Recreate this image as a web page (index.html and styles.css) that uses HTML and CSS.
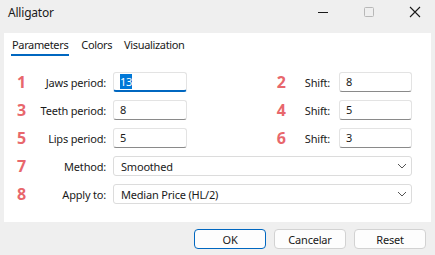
FILE: index.html
```html
<!DOCTYPE html>
<html lang="en">
<head>
  <meta charset="UTF-8">
  <title>Alligator</title>
  <link rel="stylesheet" href="styles.css">
</head>
<body>
<div class="window">
  <div class="titlebar">
    <span class="title">Alligator</span>
    <div class="controls">
      <span class="ctl">
        <svg width="12" height="12" viewBox="0 0 12 12"><path d="M1 6.5h10" stroke="#1a1a1a" stroke-width="1"/></svg>
      </span>
      <span class="ctl">
        <svg width="12" height="12" viewBox="0 0 12 12"><rect x="1.5" y="1.5" width="9" height="9" rx="1" fill="none" stroke="#b8b8b8" stroke-width="1"/></svg>
      </span>
      <span class="ctl">
        <svg width="12" height="12" viewBox="0 0 12 12"><path d="M1 1l10 10M11 1L1 11" stroke="#1a1a1a" stroke-width="1.1"/></svg>
      </span>
    </div>
  </div>

  <div class="panel">
    <div class="tabs">
      <span class="tab active">Parameters</span>
      <span class="tab">Colors</span>
      <span class="tab">Visualization</span>
    </div>

    <div class="form">
      <div class="row">
        <span class="num">1</span>
        <label class="lbl">Jaws period:</label>
        <div class="field focused"><span class="sel">13</span></div>
        <div class="right">
          <span class="num">2</span>
          <label class="lbl-s">Shift:</label>
          <div class="field">8</div>
        </div>
      </div>
      <div class="row">
        <span class="num">3</span>
        <label class="lbl">Teeth period:</label>
        <div class="field">8</div>
        <div class="right">
          <span class="num">4</span>
          <label class="lbl-s">Shift:</label>
          <div class="field">5</div>
        </div>
      </div>
      <div class="row">
        <span class="num">5</span>
        <label class="lbl">Lips period:</label>
        <div class="field">5</div>
        <div class="right">
          <span class="num">6</span>
          <label class="lbl-s">Shift:</label>
          <div class="field">3</div>
        </div>
      </div>
      <div class="row">
        <span class="num">7</span>
        <label class="lbl">Method:</label>
        <div class="combo">
          <span>Smoothed</span>
          <svg width="10" height="6" viewBox="0 0 10 6"><path d="M1 1l4 4 4-4" fill="none" stroke="#555" stroke-width="1"/></svg>
        </div>
      </div>
      <div class="row">
        <span class="num">8</span>
        <label class="lbl">Apply to:</label>
        <div class="combo">
          <span>Median Price (HL/2)</span>
          <svg width="10" height="6" viewBox="0 0 10 6"><path d="M1 1l4 4 4-4" fill="none" stroke="#555" stroke-width="1"/></svg>
        </div>
      </div>
    </div>
  </div>

  <div class="buttons">
    <button class="btn default">OK</button>
    <button class="btn">Cancelar</button>
    <button class="btn">Reset</button>
  </div>
</div>
</body>
</html>
```

FILE: styles.css
```css
* {
    margin: 0;
    padding: 0;
    box-sizing: border-box;
}

body {
    background-color: #efefef;
    font-family: "Noto Sans", "Open Sans", sans-serif;
    font-size: 11px;
    letter-spacing: -0.2px;
    color: #1a1a1a;
}

.window {
    width: 435px;
    height: 255px;
}

.titlebar {
    height: 33px;
    display: flex;
    align-items: center;
    justify-content: space-between;
    padding-left: 8px;
}

.title {
    font-size: 12px;
    margin-top: -9px;
}

.controls {
    display: flex;
    align-self: flex-start;
    margin-top: 6px;
    margin-right: -3px;
}

.ctl {
    width: 46px;
    height: 12px;
    display: flex;
    justify-content: center;
}

.panel {
    background-color: #fff;
    margin: 0 4px;
    height: 189px;
    padding: 0 19px 0 7px;
}

.tabs {
    display: flex;
    gap: 12px;
    padding-top: 4px;
    height: 39px;
}

.tab {
    height: 19px;
    line-height: 15px;
    font-size: 11px;
    letter-spacing: -0.35px;
}

.tab.active {
    border-bottom: 2px solid #0067c0;
    padding: 0 1px;
}

.form {
    display: flex;
    flex-direction: column;
    gap: 8px;
}

.row {
    display: flex;
    align-items: center;
    height: 20px;
}

.num {
    color: #e8676c;
    font-weight: bold;
    font-size: 16px;
    letter-spacing: 0;
    width: 26px;
    padding-left: 6px;
}

.lbl {
    width: 69px;
    text-align: right;
    margin-right: 7px;
}

.lbl-s {
    margin-right: 9px;
}

.field {
    width: 74px;
    height: 20px;
    border: 1px solid #e3e3e3;
    border-bottom-color: #8a8a8a;
    border-radius: 3px;
    padding: 0 6px;
    line-height: 18px;
}

.field.focused {
    border-bottom: 2px solid #0067c0;
}

.sel {
    background-color: #0078d7;
    color: #fff;
}

.right {
    margin-left: auto;
    display: flex;
    align-items: center;
}

.right .num {
    width: 28px;
    padding-left: 0;
}

.right .field {
    width: 73px;
}

.combo {
    flex: 1;
    height: 20px;
    border: 1px solid #dcdcdc;
    border-radius: 3px;
    display: flex;
    align-items: center;
    justify-content: space-between;
    padding: 0 4px 0 7px;
}

.buttons {
    display: flex;
    justify-content: flex-end;
    gap: 8px;
    padding: 7px 9px 0 0;
}

.btn {
    width: 72px;
    height: 20px;
    background-color: #fdfdfd;
    border: 1px solid #d2d2d2;
    border-radius: 4px;
    font-family: "Noto Sans", "Open Sans", sans-serif;
    font-size: 11px;
    letter-spacing: -0.2px;
    color: #1a1a1a;
}

.btn.default {
    border-color: #0067c0;
}
```
